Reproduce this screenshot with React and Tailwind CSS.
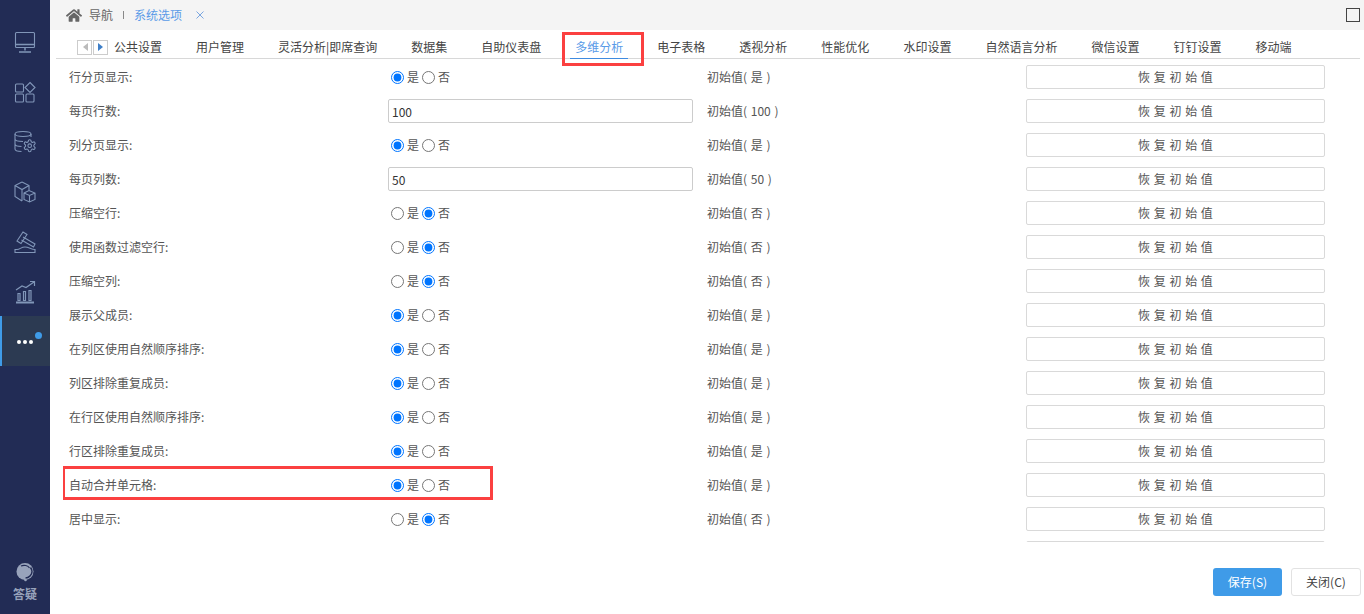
import { FaHome } from "react-icons/fa";

const TABS = [
  "公共设置",
  "用户管理",
  "灵活分析|即席查询",
  "数据集",
  "自助仪表盘",
  "多维分析",
  "电子表格",
  "透视分析",
  "性能优化",
  "水印设置",
  "自然语言分析",
  "微信设置",
  "钉钉设置",
  "移动端",
];

const ROWS = [
  { label: "行分页显示:", yes: true, init: "初始值( 是 )" },
  { label: "每页行数:", input: "100", init: "初始值( 100 )" },
  { label: "列分页显示:", yes: true, init: "初始值( 是 )" },
  { label: "每页列数:", input: "50", init: "初始值( 50 )" },
  { label: "压缩空行:", yes: false, init: "初始值( 否 )" },
  { label: "使用函数过滤空行:", yes: false, init: "初始值( 否 )" },
  { label: "压缩空列:", yes: false, init: "初始值( 否 )" },
  { label: "展示父成员:", yes: true, init: "初始值( 是 )" },
  { label: "在列区使用自然顺序排序:", yes: true, init: "初始值( 是 )" },
  { label: "列区排除重复成员:", yes: true, init: "初始值( 是 )" },
  { label: "在行区使用自然顺序排序:", yes: true, init: "初始值( 是 )" },
  { label: "行区排除重复成员:", yes: true, init: "初始值( 是 )" },
  { label: "自动合并单元格:", yes: true, init: "初始值( 是 )", marked: true },
  { label: "居中显示:", yes: false, init: "初始值( 否 )" },
];

const GEAR =
  "M12.22 2h-.44a2 2 0 0 0-2 2v.18a2 2 0 0 1-1 1.73l-.43.25a2 2 0 0 1-2 0l-.15-.08a2 2 0 0 0-2.73.73l-.22.38a2 2 0 0 0 .73 2.73l.15.1a2 2 0 0 1 1 1.72v.51a2 2 0 0 1-1 1.74l-.15.09a2 2 0 0 0-.73 2.73l.22.38a2 2 0 0 0 2.73.73l.15-.08a2 2 0 0 1 2 0l.43.25a2 2 0 0 1 1 1.73V20a2 2 0 0 0 2 2h.44a2 2 0 0 0 2-2v-.18a2 2 0 0 1 1-1.73l.43-.25a2 2 0 0 1 2 0l.15.08a2 2 0 0 0 2.73-.73l.22-.39a2 2 0 0 0-.73-2.73l-.15-.08a2 2 0 0 1-1-1.74v-.5a2 2 0 0 1 1-1.74l.15-.09a2 2 0 0 0 .73-2.73l-.22-.38a2 2 0 0 0-2.73-.73l-.15.08a2 2 0 0 1-2 0l-.43-.25a2 2 0 0 1-1-1.73V4a2 2 0 0 0-2-2z";

function NavIcon({ children }) {
  return (
    <div className="flex h-[50px] items-center justify-center pt-[2px]">
      <svg
        viewBox="0 0 24 24"
        fill="none"
        stroke="#8196b8"
        strokeWidth="1.1"
        className="h-[24px] w-[24px]"
      >
        {children}
      </svg>
    </div>
  );
}

function Sidebar() {
  return (
    <aside className="flex h-full w-[50px] shrink-0 flex-col bg-[#222c55]">
      <div className="h-[16px]" />
      <NavIcon>
        <rect x="2.5" y="2.5" width="19" height="15" rx="1" />
        <path d="M2.5 14.5h19M12 17.5v3M6 22h12" strokeWidth="1.5" />
      </NavIcon>
      <NavIcon>
        <rect x="2.5" y="4" width="8" height="8" rx="1" />
        <rect x="2.5" y="14" width="8" height="8" rx="1" />
        <rect x="13" y="14" width="8" height="8" rx="1" />
        <path d="M17 2.5l5 5-5 5-5-5z" />
      </NavIcon>
      <NavIcon>
        <ellipse cx="10" cy="4" rx="8" ry="2.5" />
        <path d="M2 4v15c0 1.500 3 2.500 6.500 2.500M18 4v3M2 9c0 1.500 3 2.500 8 2.500M2 14c0 1.500 3 2.500 6.500 2.500" />
        <g transform="translate(9.500 8.500) scale(0.6)" strokeWidth="1.8">
          <path d={GEAR} />
          <circle cx="12" cy="12" r="3" />
        </g>
      </NavIcon>
      <NavIcon>
        <path d="M9 2l7 3.500v5M9 2L2 5.500v11L9 21M2 5.500L9 9.500l7-4M9 9.500V21" />
        <path d="M11 13l5-2.500 6 2.500v6.500L16.500 22 11 19.500zM11 13l5.500 2.500L22 13M16.500 15.500V22" />
      </NavIcon>
      <NavIcon>
        <path d="M4 11l6-9 4 2.500-6 9zM10 7l12 7-1.500 3L8.500 10" />
        <path d="M2 22.500h20v-3c-4 0-6-2.500-10-2.500s-5 2.500-8 2.500H2z" />
      </NavIcon>
      <NavIcon>
        <path d="M3 22.500h18" strokeWidth="2" />
        <path d="M5 20.500v-7h2v7zM10.500 20.500v-9h2v9zM16 20.500v-10h2v10z" strokeWidth="1.200" />
        <path d="M3 10l6-4 4 1.500L21 2M17 1.500h4.500V6" strokeWidth="1.200" />
      </NavIcon>
      <div className="relative flex h-[50px] items-center justify-center border-l-2 border-[#3f9be8] bg-[#2c3a52] pt-[1px] pr-[2px]">
        <div className="flex gap-[2px]">
          <span className="h-[4px] w-[4px] rounded-full bg-white" />
          <span className="h-[4px] w-[4px] rounded-full bg-white" />
          <span className="h-[4px] w-[4px] rounded-full bg-white" />
        </div>
        <span className="absolute top-[16px] left-[33px] h-[7px] w-[7px] rounded-full bg-[#3f9be8]" />
      </div>
      <div className="mt-auto flex flex-col items-center pb-[11px] text-[12px] font-bold text-[#98a3bb]">
        <svg viewBox="0 0 20 20" className="mb-[3px] h-[20px] w-[20px]">
          <circle cx="10" cy="9.500" r="8.500" fill="#98a3bb" />
          <path d="M15.500 5.500c2 2.500 2 6-.5 8.500-1.500 1.500-3 2-4.500 2" fill="none" stroke="#222c55" strokeWidth="1.600" />
          <path d="M6 4c3-1.500 7-.5 8.500 2" fill="none" stroke="#222c55" strokeWidth="1.200" />
          <circle cx="10.500" cy="18" r="1.300" fill="#98a3bb" />
        </svg>
        答疑
      </div>
    </aside>
  );
}

function TopBar() {
  return (
    <div className="flex h-[30px] shrink-0 items-center bg-[#f4f4f4] pr-[4px] pl-[16px] text-[12px]">
      <FaHome className="h-[15px] w-[16px] text-[#666]" />
      <span className="ml-[7px] text-[#666]">导航</span>
      <span className="ml-[10px] h-[8px] w-px bg-[#888]" />
      <span className="ml-[10px] text-[#5a9be8]">系统选项</span>
      <svg viewBox="0 0 8 8" className="ml-[14px] h-[8px] w-[8px]" stroke="#7aa6e0" strokeWidth="1">
        <path d="M.5.5l7 7M7.500.5l-7 7" />
      </svg>
      <span className="ml-auto h-[14px] w-[14px] border border-[#444]" />
    </div>
  );
}

function ArrowButton({ left, dim }) {
  return (
    <span className="flex h-[15px] w-[15px] items-center justify-center border border-[#ccc] bg-white">
      <svg viewBox="0 0 6 8" className="h-[8px] w-[6px]">
        <path d={left ? "M6 0v8L1 4z" : "M0 0v8l5-4z"} fill={dim ? "#bbb" : "#3f7fc8"} />
      </svg>
    </span>
  );
}

function TabStrip() {
  return (
    <div className="mr-[4px] ml-[6px] flex h-[29px] shrink-0 items-center gap-[34px] border-b border-[#d8d8d8] pt-[6px] pl-[21px] text-[12px] text-[#444]">
      <div className="-mr-[28px] flex gap-[1px]">
        <ArrowButton left dim />
        <ArrowButton />
      </div>
      {TABS.map((tab) =>
        tab === "多维分析" ? (
          <span key={tab} className="relative text-[#5a9be8]">
            {tab}
            <span className="absolute -right-[5px] -bottom-[3px] -left-[5px] h-[1px] bg-[#3f8be0]" />
            <span className="absolute -top-[6px] -right-[21px] -bottom-[10px] -left-[13px] border-[3px] border-[#fb4040]" />
          </span>
        ) : (
          <span key={tab}>{tab}</span>
        ),
      )}
    </div>
  );
}

function YesNo({ name, yes }) {
  return (
    <div className="ml-[3px] flex items-center text-[#555]">
      <input type="radio" name={name} checked={yes} readOnly className="m-0 h-[13px] w-[13px]" />
      <span className="ml-[3px]">是</span>
      <input type="radio" name={name} checked={!yes} readOnly className="ml-[3px] h-[13px] w-[13px]" />
      <span className="ml-[3px]">否</span>
    </div>
  );
}

function OptionRow({ row, index }) {
  return (
    <div className="relative flex h-[34px] items-center text-[12px] text-[#555] [word-spacing:1px]">
      <div className="w-[325px] pl-[6px]">{row.label}</div>
      <div className="w-[318px]">
        {row.input ? (
          <input
            type="text"
            defaultValue={row.input}
            className="h-[24px] w-[305px] rounded-[2px] border border-[#ccc] bg-white pl-[3px] text-[#333] outline-none"
          />
        ) : (
          row.label && <YesNo name={`opt-${index}`} yes={row.yes} />
        )}
      </div>
      <div className="w-[320px] pl-[1px]">{row.init}</div>
      <button
        type="button"
        className="h-[24px] w-[299px] rounded-[2px] border border-[#d9d9d9] bg-white text-[#555] [word-spacing:1px]"
      >
        {row.label && "恢 复 初 始 值"}
      </button>
      {row.marked && (
        <span className="absolute top-[-2px] left-[-1px] h-[34px] w-[431px] border-[3px] border-[#fb4040]" />
      )}
    </div>
  );
}

export default function App() {
  return (
    <div
      className="flex h-[614px] w-[1364px] overflow-hidden bg-white"
      style={{ fontFamily: '"Noto Sans CJK SC", "Noto Sans", sans-serif' }}
    >
      <Sidebar />
      <main className="flex min-w-0 flex-1 flex-col">
        <TopBar />
        <TabStrip />
        <div className="ml-[13px] h-[483px] shrink-0 overflow-hidden pt-[1px]">
          {ROWS.map((row, i) => (
            <OptionRow key={row.label} row={row} index={i} />
          ))}
          <OptionRow row={{ label: "", init: "" }} index={14} />
        </div>
        <div className="flex flex-1 items-start justify-end gap-[9px] pt-[26px] pr-[3px] text-[12px]">
          <button
            type="button"
            className="h-[28px] w-[69px] rounded-[3px] bg-[#3f9be8] text-white"
          >
            保存(S)
          </button>
          <button
            type="button"
            className="h-[28px] w-[70px] rounded-[3px] border border-[#e2e2e2] bg-white text-[#444]"
          >
            关闭(C)
          </button>
        </div>
      </main>
    </div>
  );
}
